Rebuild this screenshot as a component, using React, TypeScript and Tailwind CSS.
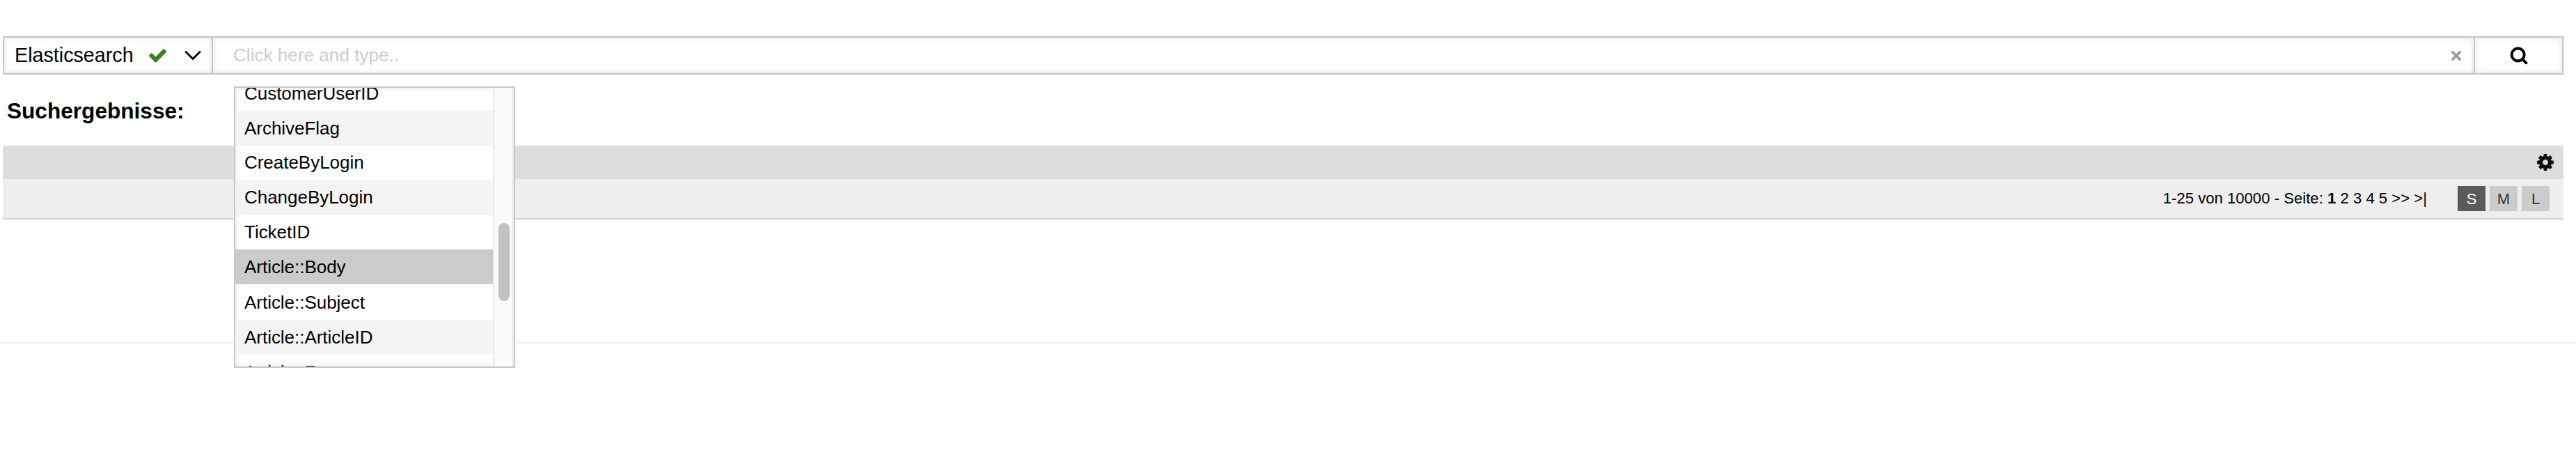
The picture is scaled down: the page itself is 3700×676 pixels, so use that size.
import React from "react";

const items = [
  { label: "CustomerUserID", row: "h-[50px] bg-transparent" },
  { label: "ArchiveFlag", row: "h-[50px] bg-[#f4f4f4]" },
  { label: "CreateByLogin", row: "h-[50px] bg-transparent pb-[2px]" },
  { label: "ChangeByLogin", row: "h-[50px] bg-[#f4f4f4] pb-[2px]" },
  { label: "TicketID", row: "h-[49px] bg-transparent" },
  { label: "Article::Body", row: "h-[50px] bg-[#cbcbcb]" },
  { label: "Article::Subject", row: "h-[52px] bg-transparent" },
  { label: "Article::ArticleID", row: "h-[49px] bg-[#f4f4f4]" },
  { label: "Article::From", row: "h-[50px] bg-transparent" },
];

function CheckIcon() {
  return (
    <svg className="ml-[16px] h-[29px] w-[29px] shrink-0" viewBox="0 0 1792 1792" fill="#3a8020">
      <path d="M1671 566q0 40-28 68l-724 724-136 136q-28 28-68 28t-68-28l-136-136-362-362q-28-28-28-68t28-68l136-136q28-28 68-28t68 28l294 295 656-657q28-28 68-28t68 28l136 136q28 28 28 68z" />
    </svg>
  );
}

function CogIcon() {
  return (
    <svg className="h-6 w-6" viewBox="128 128 1536 1536" fill="#111">
      <path d="M1152 896q0-106-75-181t-181-75-181 75-75 181 75 181 181 75 181-75 75-181zm512-109v222q0 12-8 23t-20 13l-185 28q-19 54-39 91 35 50 107 138 10 12 10 25t-9 23q-27 37-99 108t-94 71q-12 0-26-9l-138-108q-44 23-91 38-16 136-29 186-7 28-36 28h-222q-14 0-24.5-8.5t-11.5-21.5l-28-184q-49-16-90-37l-141 107q-10 9-25 9-14 0-25-11-126-114-165-168-7-10-7-23 0-12 8-23 15-21 51-66.5t54-70.5q-27-50-41-99l-183-27q-13-2-21-12.5t-8-23.5v-222q0-12 8-23t19-13l186-28q14-46 39-92-40-57-107-138-10-12-10-24 0-10 9-23 26-36 98.5-107.5t94.5-71.5q13 0 26 10l138 107q44-23 91-38 16-136 29-186 7-28 36-28h222q14 0 24.5 8.5t11.5 21.5l28 184q49 16 90 37l142-107q9-9 24-9 13 0 25 10 129 119 165 170 7 8 7 22 0 12-8 23-15 21-51 66.5t-54 70.5q26 50 41 98l183 28q13 2 21 12.5t8 23.5z" />
    </svg>
  );
}

function Dropdown() {
  return (
    <div className="absolute left-[336px] top-[124px] flex h-[404px] w-[404px] overflow-hidden border-2 border-[#c8c8c8] bg-white text-[26px] shadow-[inset_0_0_10px_#e4e4e4]">
      <div className="-mt-[17px] w-[370px] shrink-0">
        {items.map((item) => (
          <div key={item.label} className={`flex items-center pl-[13px] tracking-[-0.03px] ${item.row}`}>
            {item.label}
          </div>
        ))}
      </div>
      <div className="h-full w-[30px] shrink-0 border-x-2 border-[#e8e8e8] bg-[#fafafa] pl-[6px] pt-[194px]">
        <div className="h-[112px] w-4 rounded-full bg-[#c1c1c1]" />
      </div>
    </div>
  );
}

export default function App() {
  return (
    <div className="relative h-[676px] w-[3700px] overflow-hidden bg-white pt-[52px] font-['Liberation_Sans',Arial,sans-serif] text-black">
      <div className="ml-1 flex h-[55px] w-[3678px] border-2 border-[#c4c4c4]">
        <div className="flex w-[298px] items-center pl-[15px] text-[28.7px] shadow-[inset_0_0_10px_#e4e4e4]">
          <span className="w-[175px] whitespace-nowrap">Elasticsearch</span>
          <CheckIcon />
          <svg className="ml-[23px] h-[16px] w-[26px]" viewBox="0 0 26 16" fill="none" stroke="#000" strokeWidth="2.8">
            <path d="M3 2.5l10 10 10-10" strokeLinecap="round" />
          </svg>
        </div>
        <div className="flex flex-1 items-center justify-between border-l-2 border-[#c8c8c8] pl-[29px] pr-[18px] shadow-[inset_0_0_10px_#e4e4e4]">
          <span className="text-[26px] tracking-[0.05px] text-[#ccc]">Click here and type..</span>
          <svg className="h-[14px] w-[14px]" viewBox="0 0 14 14" stroke="#999" strokeWidth="3.6">
            <path d="M1.8 1.8l10.4 10.4M12.2 1.8l-10.4 10.4" strokeLinecap="round" />
          </svg>
        </div>
        <div className="flex w-[127px] items-center justify-center border-l-2 border-[#c8c8c8] shadow-[inset_0_0_10px_#e4e4e4]">
          <svg className="h-[26px] w-[26px]" viewBox="0 0 26 26" fill="none" stroke="#000">
            <circle cx="11.7" cy="11.5" r="9" strokeWidth="3.8" />
            <path d="M18 17.8l5.5 5.5" strokeWidth="3.8" strokeLinecap="round" />
          </svg>
        </div>
      </div>
      <h1 className="ml-[10px] mt-[32px] h-[70px] text-[31.6px] leading-[40px] font-bold">Suchergebnisse:</h1>
      <div className="ml-1 w-[3678px]">
        <div className="flex h-12 items-center justify-end bg-[#ddd] pr-[14px]">
          <CogIcon />
        </div>
        <div className="flex h-[58px] items-center justify-end border-b-2 border-[#ccc] bg-[#eee] pr-5">
          <div className="mr-[44px] whitespace-pre pb-px text-[22px] tracking-[0.06px]">
            1-25 von 10000 - Seite: <b>1</b> 2 3 4 5 &gt;&gt; &gt;|
          </div>
          <div className="flex gap-[6px] text-[22px] text-[#333]">
            <div className="flex h-9 w-10 items-center justify-center bg-[#5b5b5b] text-white">S</div>
            <div className="flex h-9 w-10 items-center justify-center bg-[#ccc]">M</div>
            <div className="flex h-9 w-10 items-center justify-center bg-[#ccc]">L</div>
          </div>
        </div>
      </div>
      <div className="mt-[176px] h-[2px] bg-[#eee]" />
      <Dropdown />
    </div>
  );
}
